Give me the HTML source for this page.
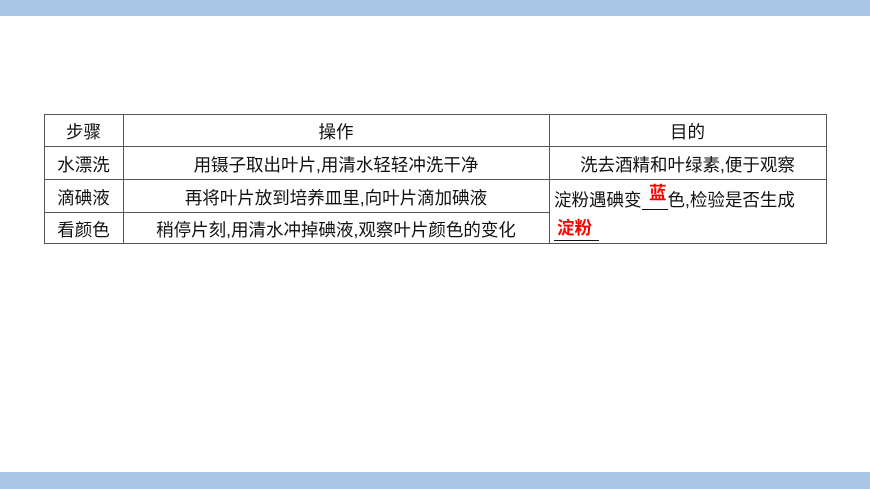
<!DOCTYPE html>
<html><head><meta charset="utf-8"><style>
body{margin:0;width:870px;height:489px;background:#fff;position:relative;overflow:hidden;font-family:"Liberation Sans","Noto Sans CJK SC",sans-serif;color:#111}
.bar{position:absolute;left:0;width:870px;background:#a9c5e5}
.l{position:absolute;background:#555}
.t{position:absolute;font-size:17.5px;line-height:20px;white-space:nowrap}
.c{text-align:center}
.r{color:#f00;font-weight:bold}
</style></head><body>
<div class="bar" style="top:0;height:16px"></div>
<div class="bar" style="top:472px;height:17px"></div>
<div class="l" style="left:44px;top:114px;width:783px;height:1px"></div>
<div class="l" style="left:44px;top:146px;width:783px;height:1px"></div>
<div class="l" style="left:44px;top:179px;width:783px;height:1px"></div>
<div class="l" style="left:44px;top:212px;width:505px;height:1px"></div>
<div class="l" style="left:44px;top:243px;width:783px;height:1px"></div>
<div class="l" style="left:44px;top:114px;width:1px;height:130px"></div>
<div class="l" style="left:123px;top:114px;width:1px;height:130px"></div>
<div class="l" style="left:549px;top:114px;width:1px;height:130px"></div>
<div class="l" style="left:826px;top:114px;width:1px;height:130px"></div>
<div class="t c" style="left:44px;top:122px;width:79px">步骤</div>
<div class="t c" style="left:123px;top:122px;width:426px">操作</div>
<div class="t c" style="left:549px;top:122px;width:277px">目的</div>
<div class="t c" style="left:44px;top:155px;width:79px">水漂洗</div>
<div class="t c" style="left:123px;top:155px;width:426px">用镊子取出叶片,用清水轻轻冲洗干净</div>
<div class="t c" style="left:549px;top:155px;width:277px">洗去酒精和叶绿素,便于观察</div>
<div class="t c" style="left:44px;top:188px;width:79px">滴碘液</div>
<div class="t c" style="left:123px;top:188px;width:426px">再将叶片放到培养皿里,向叶片滴加碘液</div>
<div class="t c" style="left:44px;top:220px;width:79px">看颜色</div>
<div class="t c" style="left:123px;top:220px;width:426px">稍停片刻,用清水冲掉碘液,观察叶片颜色的变化</div>
<div class="t" style="left:554px;top:190px">淀粉遇碘变<span style="display:inline-block;width:26px;border-bottom:1px solid #111;height:19px;vertical-align:top"></span>色,检验是否生成</div>
<div class="t r" style="left:649px;top:183px">蓝</div>
<div class="t r" style="left:557px;top:218px">淀粉</div>
<div class="l" style="left:554px;top:240px;width:45px;height:1px;background:#111"></div>
</body></html>
